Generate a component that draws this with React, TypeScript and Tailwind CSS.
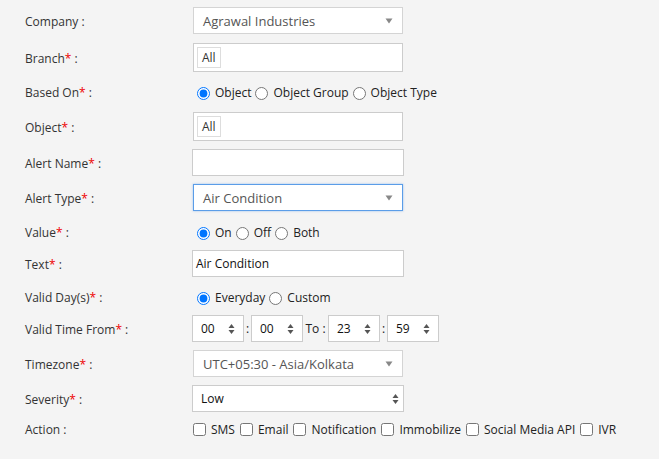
import React from "react";

const font = { fontFamily: '"Open Sans", "Liberation Sans", sans-serif' };

function Label({ text, req = true }: { text: string; req?: boolean }) {
  return (
    <div className="w-[192px] shrink-0 pl-[25px] pt-[2px] text-[12px] text-[#333]">
      {text}
      {req && <span className="text-[#e00]">*</span>} :
    </div>
  );
}

function Caret() {
  return (
    <svg width="8" height="6" viewBox="0 0 8 6" className="absolute right-[9px] top-1/2 -translate-y-1/2">
      <path d="M0.5 0.5h7L4 5.5z" fill="#888" />
    </svg>
  );
}

function UpDown({ className = "" }: { className?: string }) {
  return (
    <svg width="7" height="11" viewBox="0 0 7 11" className={className}>
      <path d="M3.5 0.5L6.5 4.5H0.5z M3.5 10.5L6.5 6.5H0.5z" fill="#555" />
    </svg>
  );
}

function SelectBox({ value, focus = false }: { value: string; focus?: boolean }) {
  return (
    <div
      className={`relative ml-px w-[210px] h-[27px] bg-white flex items-center pl-[9px] pt-[2px] text-[13px] text-[#555] ${
        focus ? "border border-[#5b9de8] shadow-[0_0_2px_rgba(91,157,232,0.6)]" : "border border-[#d4d4d4]"
      }`}
    >
      {value}
      <Caret />
    </div>
  );
}

function ChipBox() {
  return (
    <div className="ml-px w-[210px] h-[29px] bg-white border border-[#ccc] flex items-center pl-[3px]">
      <span className="border border-[#ddd] h-[21px] px-[4px] flex items-center text-[12px] text-[#333]">All</span>
    </div>
  );
}

function Radio({ label, checked = false }: { label: string; checked?: boolean }) {
  return (
    <label className="flex items-center text-[12px] text-[#222]">
      <input type="radio" name={label} defaultChecked={checked} className="m-0 mr-[5px] w-[13px] h-[13px] accent-[#0075ff]" />
      <span className="mr-[4px]">{label}</span>
    </label>
  );
}

function Check({ label }: { label: string }) {
  return (
    <label className="flex items-center text-[12px] text-[#222] mr-[5px]">
      <input type="checkbox" className="m-0 mr-[5px] w-[13px] h-[13px]" />
      {label}
    </label>
  );
}

function Spin({ v }: { v: string }) {
  return (
    <div className="relative w-[52px] h-[27px] bg-white border border-[#ccc] flex items-center pl-[8px] text-[12px] text-[#111]">
      {v}
      <UpDown className="absolute right-[8px] top-1/2 -translate-y-1/2" />
    </div>
  );
}

export default function App() {
  return (
    <div className="w-[659px] h-[459px] bg-[#f4f4f4] pt-[7px]" style={font}>
      <div className="flex items-center h-[27px]">
        <Label text="Company" req={false} />
        <SelectBox value="Agrawal Industries" />
      </div>
      <div className="flex items-center h-[29px] mt-[9px]">
        <Label text="Branch" />
        <ChipBox />
      </div>
      <div className="flex items-center h-[22px] mt-[9px]">
        <Label text="Based On" />
        <div className="flex items-center ml-[5px] pt-[2px]">
          <Radio label="Object" checked />
          <Radio label="Object Group" />
          <Radio label="Object Type" />
        </div>
      </div>
      <div className="flex items-center h-[29px] mt-[9px]">
        <Label text="Object" />
        <ChipBox />
      </div>
      <div className="flex items-center h-[27px] mt-[8px]">
        <Label text="Alert Name" />
        <div className="w-[212px] h-[27px] bg-white border border-[#ccc]" />
      </div>
      <div className="flex items-center h-[27px] mt-[8px]">
        <Label text="Alert Type" />
        <SelectBox value="Air Condition" focus />
      </div>
      <div className="flex items-center h-[22px] mt-[10px]">
        <Label text="Value" />
        <div className="flex items-center ml-[5px] pt-[2px]">
          <Radio label="On" checked />
          <Radio label="Off" />
          <Radio label="Both" />
        </div>
      </div>
      <div className="flex items-center h-[27px] mt-[7px]">
        <Label text="Text" />
        <div className="w-[212px] h-[27px] bg-white border border-[#ccc] flex items-center pl-[3px] pt-[1px] text-[12px] text-[#111]">
          Air Condition
        </div>
      </div>
      <div className="flex items-center h-[22px] mt-[9px]">
        <Label text="Valid Day(s)" />
        <div className="flex items-center ml-[5px] pt-[2px]">
          <Radio label="Everyday" checked />
          <Radio label="Custom" />
        </div>
      </div>
      <div className="flex items-center h-[27px] mt-[7px] text-[12px] text-[#222]">
        <Label text="Valid Time From" />
        <Spin v="00" />
        <span className="w-[7px] text-center">:</span>
        <Spin v="00" />
        <span className="w-[25px] text-center">To :</span>
        <Spin v="23" />
        <span className="w-[7px] text-center">:</span>
        <Spin v="59" />
      </div>
      <div className="flex items-center h-[27px] mt-[8px]">
        <Label text="Timezone" />
        <SelectBox value="UTC+05:30 - Asia/Kolkata" />
      </div>
      <div className="flex items-center h-[27px] mt-[8px]">
        <Label text="Severity" />
        <div className="relative w-[212px] h-[27px] bg-white border border-[#ccc] flex items-center pl-[8px] pt-[1px] text-[12px] text-[#111]">
          Low
          <UpDown className="absolute right-[4px] top-1/2 -translate-y-1/2" />
        </div>
      </div>
      <div className="flex items-center h-[22px] mt-[6px]">
        <Label text="Action" req={false} />
        <div className="flex items-center ml-px pt-[1px]">
          <Check label="SMS" />
          <Check label="Email" />
          <Check label="Notification" />
          <Check label="Immobilize" />
          <Check label="Social Media API" />
          <Check label="IVR" />
        </div>
      </div>
    </div>
  );
}
